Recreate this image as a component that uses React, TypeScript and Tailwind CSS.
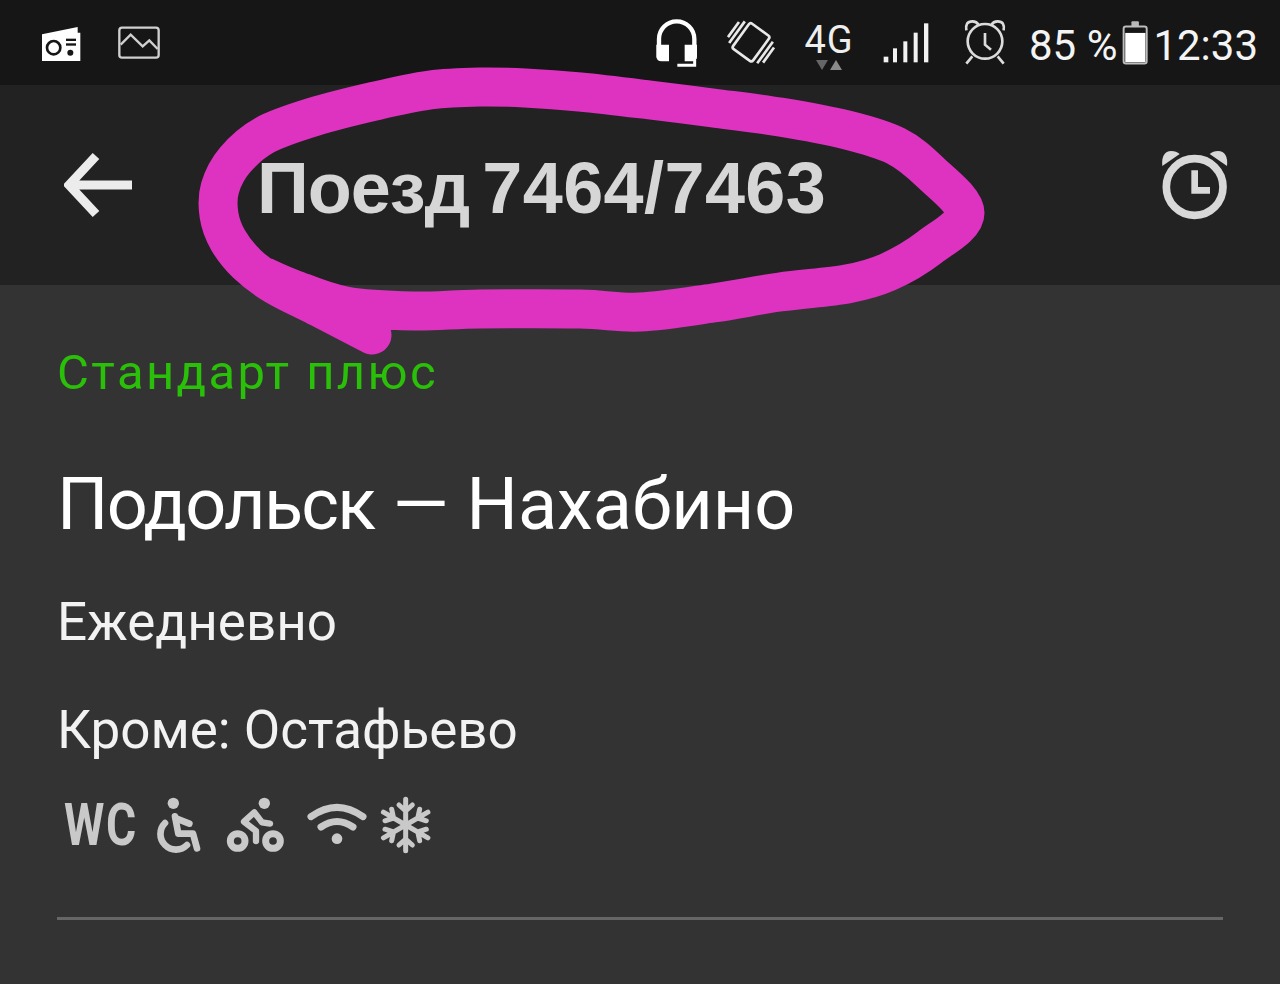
const ROBOTO = "font-['Roboto',sans-serif]";

// hand drawn marker ring round the title, points follow the centre of the stroke
const ringPoints: [number, number][] = [
  [265, 277], [293, 289], [345, 306], [413, 311], [480, 309], [580, 309], [640, 312], [713, 303], [780, 292], [847, 284],
  [888, 272], [930, 247], [965, 213], [930, 172], [896, 146], [847, 130], [780, 117], [713, 108], [650, 100], [580, 92],
  [525, 88], [480, 87], [430, 90], [375, 101], [313, 117], [265, 135], [235, 160], [220, 188], [219, 215], [228, 240],
  [247, 264], [275, 285], [320, 308], [372, 335],
];

function smoothPath(points: [number, number][]) {
  let d = `M${points[0][0]} ${points[0][1]}`;
  for (let i = 0; i < points.length - 1; i++) {
    const p0 = points[Math.max(i - 1, 0)];
    const p1 = points[i];
    const p2 = points[i + 1];
    const p3 = points[Math.min(i + 2, points.length - 1)];
    const c1x = p1[0] + (p2[0] - p0[0]) / 6;
    const c1y = p1[1] + (p2[1] - p0[1]) / 6;
    const c2x = p2[0] - (p3[0] - p1[0]) / 6;
    const c2y = p2[1] - (p3[1] - p1[1]) / 6;
    d += ` C${c1x} ${c1y} ${c2x} ${c2y} ${p2[0]} ${p2[1]}`;
  }
  return d;
}

function RadioIcon() {
  return (
    <svg width="40" height="36" viewBox="122 72 120 108" className="shrink-0">
      <path d="M125 100 L232 78 L232 95 L240 95 L240 180 L125 180 Z" fill="#fff" />
      <circle cx="160" cy="140" r="20" fill="none" stroke="#161616" strokeWidth="8" />
      <rect x="197" y="113" width="30" height="7" fill="#161616" />
      <rect x="197" y="127" width="30" height="7" fill="#161616" />
      <circle cx="210" cy="155" r="9" fill="#161616" />
    </svg>
  );
}

function ImageIcon() {
  return (
    <svg width="42" height="34" viewBox="354 79 126 102" className="shrink-0">
      <rect x="358" y="84" width="118" height="90" rx="8" fill="none" stroke="#d0d0d0" strokeWidth="7" />
      <path d="M362 135 L392 105 L428 140 L448 122 L473 148" fill="none" stroke="#d0d0d0" strokeWidth="7" />
    </svg>
  );
}

function HeadsetIcon() {
  return (
    <svg width="44" height="50" viewBox="46 55 132 150" className="shrink-0">
      <path d="M58 175 V118 A53 53 0 0 1 164 118 V178" fill="none" stroke="#fff" strokeWidth="13" />
      <path d="M50 135 H88 V185 H66 Q50 185 50 170 Z" fill="#fff" />
      <path d="M135 135 H172 V170 Q172 185 158 185 H135 Z" fill="#fff" />
      <path d="M113 197 H165 V180" fill="none" stroke="#fff" strokeWidth="9" />
    </svg>
  );
}

function VibrateIcon() {
  return (
    <svg width="52" height="48" viewBox="262 58 156 144" className="shrink-0">
      <g transform="translate(340 128) rotate(36)" fill="none" stroke="#e8e8e8" strokeWidth="8">
        <rect x="-37" y="-47" width="74" height="94" rx="7" />
        <path d="M-52 -40 V40 M-65 -28 V28 M52 -40 V40 M65 -28 V28" />
      </g>
    </svg>
  );
}

function SignalIcon() {
  return (
    <svg width="48" height="42" viewBox="726 66 144 126" className="shrink-0">
      <g fill="#f2f2f2">
        <rect x="731" y="170" width="14" height="17" />
        <rect x="759" y="145" width="12" height="42" />
        <rect x="790" y="124" width="12" height="63" />
        <rect x="821" y="98" width="12" height="89" />
        <rect x="852" y="70" width="13" height="117" />
      </g>
    </svg>
  );
}

function SmallAlarmIcon() {
  return (
    <svg width="44" height="48" viewBox="44 58 132 144" className="shrink-0">
      <g fill="none" stroke="#dcdcdc" strokeWidth="8">
        <circle cx="110" cy="125" r="52" />
        <path d="M110 100 V135 L128 150" />
        <path d="M54 92 Q50 65 72 65 Q85 65 90 75 M166 92 Q170 65 148 65 Q135 65 130 75" />
        <path d="M72 170 L54 192 M148 170 L166 192" />
      </g>
    </svg>
  );
}

function BatteryIcon() {
  return (
    <svg width="26" height="46" viewBox="516 60 80 138" className="shrink-0">
      <rect x="545" y="62" width="23" height="16" rx="3" fill="#b8b8b8" />
      <rect x="521" y="78" width="71" height="114" rx="7" fill="none" stroke="#bdbdbd" strokeWidth="6" />
      <rect x="526" y="98" width="62" height="90" fill="#fff" />
    </svg>
  );
}

function HeaderAlarmIcon() {
  return (
    <svg width="68" height="70" viewBox="96 64 200 210" className="shrink-0">
      <circle cx="195" cy="175" r="85" fill="none" stroke="#d8d8d8" strokeWidth="23" />
      <path d="M195 125 V185 H241" fill="none" stroke="#d8d8d8" strokeWidth="20" />
      <path d="M98 112 Q94 68 125 67 Q140 67 150 76 Z" fill="#d8d8d8" />
      <path d="M292 112 Q296 68 265 67 Q250 67 240 76 Z" fill="#d8d8d8" />
    </svg>
  );
}

function WheelchairIcon() {
  return (
    <svg width="46" height="56" viewBox="345 48 138 168" className="shrink-0">
      <circle cx="397" cy="67" r="17" fill="#c9c9c9" />
      <g fill="none" stroke="#c9c9c9" strokeWidth="20" strokeLinecap="round" strokeLinejoin="round">
        <path d="M402 106 L412 158 L456 158 L468 202" />
        <path d="M405 112 L445 128" />
        <path d="M372 126 A46 46 0 1 0 438 192" />
      </g>
    </svg>
  );
}

function BikeIcon() {
  return (
    <svg width="58" height="56" viewBox="560 48 174 168" className="shrink-0">
      <circle cx="675" cy="67" r="17" fill="#c9c9c9" />
      <g fill="none" stroke="#c9c9c9">
        <circle cx="595" cy="180" r="22" strokeWidth="21" />
        <circle cx="701" cy="180" r="22" strokeWidth="21" />
        <path d="M650 180 V150 L614 122 L645 94 L668 124 L692 128" strokeWidth="19" strokeLinecap="round" strokeLinejoin="round" />
      </g>
    </svg>
  );
}

function WifiIcon() {
  return (
    <svg width="60" height="50" viewBox="798 72 180 150" className="shrink-0">
      <g fill="none" stroke="#c9c9c9" strokeWidth="21" strokeLinecap="round">
        <path d="M810 122 Q888 66 966 122" />
        <path d="M840 153 Q888 120 936 153" />
      </g>
      <circle cx="888" cy="188" r="16" fill="#c9c9c9" />
    </svg>
  );
}

function SnowflakeIcon() {
  return (
    <svg width="52" height="58" viewBox="1018 48 156 174" className="shrink-0">
      <g transform="translate(1095 135)" fill="none" stroke="#c9c9c9" strokeWidth="15" strokeLinecap="round">
        {[0, 60, 120, 180, 240, 300].map((angle) => (
          <g key={angle} transform={`rotate(${angle})`}>
            <path d="M0 0 V-77 M0 -42 L-20 -60 M0 -42 L20 -60" />
          </g>
        ))}
      </g>
    </svg>
  );
}

export default function App() {
  return (
    <div className={`relative h-[984px] w-[1280px] overflow-hidden bg-[#333333] ${ROBOTO}`}>
      <div className="flex h-[85px] items-center bg-[#161616] pl-[41px] pr-[22px]">
        <RadioIcon />
        <div className="ml-[37px]">
          <ImageIcon />
        </div>
        <div className="ml-auto flex items-center">
          <HeadsetIcon />
          <div className="ml-[26px]">
            <VibrateIcon />
          </div>
          <div className="ml-[27px] flex w-[50px] flex-col items-center pt-[6px]">
            <span className="text-[38px] leading-[38px] tracking-[1px] text-[#eeeeee]">4G</span>
            <div className="mt-[1px] flex gap-[2px]">
              <span className="h-0 w-0 border-x-[6px] border-t-[10px] border-x-transparent border-t-[#666666]" />
              <span className="h-0 w-0 border-x-[6px] border-b-[10px] border-x-transparent border-b-[#8a8a8a]" />
            </div>
          </div>
          <div className="ml-[28px]">
            <SignalIcon />
          </div>
          <div className="ml-[33px]">
            <SmallAlarmIcon />
          </div>
          <span className="mt-[7px] ml-[22px] text-[42px] leading-none text-[#f4f4f4]">85 %</span>
          <div className="ml-[5px]">
            <BatteryIcon />
          </div>
          <span className="mt-[7px] ml-[5px] text-[42px] leading-none text-[#f4f4f4]">12:33</span>
        </div>
      </div>

      <header className="flex h-[200px] items-center bg-[#222222] pl-[64px] pr-[51px]">
        <svg width="71" height="68" viewBox="1 0 71 68" className="shrink-0">
          <path d="M33 5 L6 34 L33 63 M6 34 H69" fill="none" stroke="#ececec" strokeWidth="9" />
        </svg>
        <h1 className="mt-[6px] ml-[122px] font-['Liberation_Sans',sans-serif] text-[72px] leading-none font-bold text-[#d6d6d6] [word-spacing:-7px]">
          <span className="tracking-[-1px]">Поезд</span> <span className="tracking-[0.4px]">7464/7463</span>
        </h1>
        <div className="ml-auto">
          <HeaderAlarmIcon />
        </div>
      </header>

      <main className="px-[57px] pt-[58px]">
        <p className="text-[49px] leading-[60px] tracking-[2.4px] text-[#2abf08]">Стандарт плюс</p>
        <h2 className="mt-[62px] text-[72px] leading-[80px] text-white">
          <span className="tracking-[-1.7px]">Подольск</span> — Нахабино
        </h2>
        <p className="mt-[47px] text-[53px] leading-[60px] text-[#f2f2f2]">Ежедневно</p>
        <p className="mt-[48px] text-[53px] leading-[60px] text-[#f2f2f2]">Кроме: Остафьево</p>
        <div className="mt-[36px] flex items-center pl-[7px]">
          <span className="inline-block w-[75px] origin-left scale-x-[0.77] text-[60px] leading-[56px] font-bold tracking-[2px] whitespace-nowrap text-[#c9c9c9]">
            WC
          </span>
          <div className="ml-[17px]">
            <WheelchairIcon />
          </div>
          <div className="ml-[24px]">
            <BikeIcon />
          </div>
          <div className="ml-[23px]">
            <WifiIcon />
          </div>
          <div className="ml-[13px]">
            <SnowflakeIcon />
          </div>
        </div>
        <div className="mt-[63px] h-[3px] w-[1166px] bg-[#666666]" />
      </main>

      <svg width="1280" height="984" viewBox="0 0 1280 984" className="pointer-events-none absolute inset-0">
        <path d={smoothPath(ringPoints)} fill="none" stroke="#dd33c0" strokeWidth="39" strokeLinecap="round" strokeLinejoin="round" />
      </svg>
    </div>
  );
}
